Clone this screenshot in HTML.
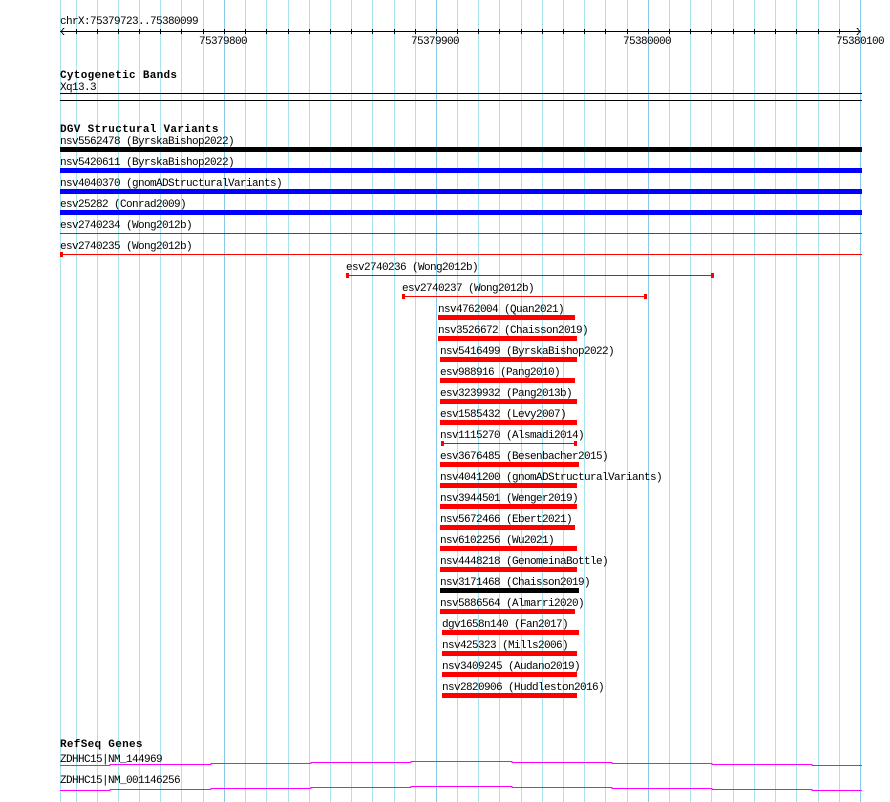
<!DOCTYPE html>
<html><head><meta charset="utf-8"><style>
html,body{margin:0;padding:0;background:#fff;}
svg{display:block;}
text{font-family:"Liberation Mono",monospace;font-size:11px;letter-spacing:-0.6px;fill:#000;}
.b{font-weight:bold;font-size:11px;letter-spacing:0.3px;}
</style></head><body>
<svg width="890" height="802" viewBox="0 0 890 802" xmlns="http://www.w3.org/2000/svg" shape-rendering="crispEdges">
<line x1="60.5" y1="0" x2="60.5" y2="802" stroke="#a8e4ee"/>
<g stroke="#a8e4ee">
<line x1="76.5" y1="0" x2="76.5" y2="802"/><line x1="97.5" y1="0" x2="97.5" y2="802"/><line x1="118.5" y1="0" x2="118.5" y2="802"/><line x1="139.5" y1="0" x2="139.5" y2="802"/><line x1="160.5" y1="0" x2="160.5" y2="802"/><line x1="181.5" y1="0" x2="181.5" y2="802"/><line x1="203.5" y1="0" x2="203.5" y2="802"/>
<line x1="245.5" y1="0" x2="245.5" y2="802"/><line x1="266.5" y1="0" x2="266.5" y2="802"/><line x1="288.5" y1="0" x2="288.5" y2="802"/><line x1="309.5" y1="0" x2="309.5" y2="802"/><line x1="330.5" y1="0" x2="330.5" y2="802"/><line x1="351.5" y1="0" x2="351.5" y2="802"/><line x1="372.5" y1="0" x2="372.5" y2="802"/><line x1="394.5" y1="0" x2="394.5" y2="802"/><line x1="415.5" y1="0" x2="415.5" y2="802"/>
<line x1="457.5" y1="0" x2="457.5" y2="802"/><line x1="478.5" y1="0" x2="478.5" y2="802"/><line x1="499.5" y1="0" x2="499.5" y2="802"/><line x1="521.5" y1="0" x2="521.5" y2="802"/><line x1="542.5" y1="0" x2="542.5" y2="802"/><line x1="563.5" y1="0" x2="563.5" y2="802"/><line x1="584.5" y1="0" x2="584.5" y2="802"/><line x1="605.5" y1="0" x2="605.5" y2="802"/><line x1="627.5" y1="0" x2="627.5" y2="802"/>
<line x1="669.5" y1="0" x2="669.5" y2="802"/><line x1="690.5" y1="0" x2="690.5" y2="802"/><line x1="711.5" y1="0" x2="711.5" y2="802"/><line x1="733.5" y1="0" x2="733.5" y2="802"/><line x1="754.5" y1="0" x2="754.5" y2="802"/><line x1="775.5" y1="0" x2="775.5" y2="802"/><line x1="796.5" y1="0" x2="796.5" y2="802"/><line x1="818.5" y1="0" x2="818.5" y2="802"/><line x1="839.5" y1="0" x2="839.5" y2="802"/>
</g>
<g stroke="#88c8e8">
<line x1="224.5" y1="0" x2="224.5" y2="802"/><line x1="436.5" y1="0" x2="436.5" y2="802"/><line x1="648.5" y1="0" x2="648.5" y2="802"/><line x1="860.5" y1="0" x2="860.5" y2="802"/>
</g>
<text x="60" y="24">chrX:75379723..75380099</text>
<line x1="60" y1="31.5" x2="861" y2="31.5" stroke="#000"/>
<polyline points="64,28 61,31.5 64,35" fill="none" stroke="#000"/>
<polyline points="857,28 860,31.5 857,35" fill="none" stroke="#000"/>
<g stroke="#000">
<line x1="76.5" y1="29" x2="76.5" y2="34"/><line x1="97.5" y1="29" x2="97.5" y2="34"/><line x1="118.5" y1="29" x2="118.5" y2="34"/><line x1="139.5" y1="29" x2="139.5" y2="34"/><line x1="160.5" y1="29" x2="160.5" y2="34"/><line x1="181.5" y1="29" x2="181.5" y2="34"/><line x1="203.5" y1="29" x2="203.5" y2="34"/><line x1="224.5" y1="29" x2="224.5" y2="34"/><line x1="245.5" y1="29" x2="245.5" y2="34"/><line x1="266.5" y1="29" x2="266.5" y2="34"/><line x1="288.5" y1="29" x2="288.5" y2="34"/><line x1="309.5" y1="29" x2="309.5" y2="34"/><line x1="330.5" y1="29" x2="330.5" y2="34"/><line x1="351.5" y1="29" x2="351.5" y2="34"/><line x1="372.5" y1="29" x2="372.5" y2="34"/><line x1="394.5" y1="29" x2="394.5" y2="34"/><line x1="415.5" y1="29" x2="415.5" y2="34"/><line x1="436.5" y1="29" x2="436.5" y2="34"/><line x1="457.5" y1="29" x2="457.5" y2="34"/><line x1="478.5" y1="29" x2="478.5" y2="34"/><line x1="499.5" y1="29" x2="499.5" y2="34"/><line x1="521.5" y1="29" x2="521.5" y2="34"/><line x1="542.5" y1="29" x2="542.5" y2="34"/><line x1="563.5" y1="29" x2="563.5" y2="34"/><line x1="584.5" y1="29" x2="584.5" y2="34"/><line x1="605.5" y1="29" x2="605.5" y2="34"/><line x1="627.5" y1="29" x2="627.5" y2="34"/><line x1="648.5" y1="29" x2="648.5" y2="34"/><line x1="669.5" y1="29" x2="669.5" y2="34"/><line x1="690.5" y1="29" x2="690.5" y2="34"/><line x1="711.5" y1="29" x2="711.5" y2="34"/><line x1="733.5" y1="29" x2="733.5" y2="34"/><line x1="754.5" y1="29" x2="754.5" y2="34"/><line x1="775.5" y1="29" x2="775.5" y2="34"/><line x1="796.5" y1="29" x2="796.5" y2="34"/><line x1="818.5" y1="29" x2="818.5" y2="34"/><line x1="839.5" y1="29" x2="839.5" y2="34"/>
</g>
<text x="199" y="44">75379800</text>
<text x="411" y="44">75379900</text>
<text x="623" y="44">75380000</text>
<text x="836" y="44">75380100</text>
<text class="b" x="60" y="78">Cytogenetic Bands</text>
<text x="60" y="90">Xq13.3</text>
<rect x="60" y="93" width="802" height="1" fill="#000"/>
<rect x="60" y="100" width="802" height="1" fill="#000"/>
<text class="b" x="60" y="132">DGV Structural Variants</text>
<text x="60" y="144">nsv5562478 (ByrskaBishop2022)</text>
<rect x="60" y="147" width="802" height="5" fill="#000"/>
<text x="60" y="165">nsv5420611 (ByrskaBishop2022)</text>
<rect x="60" y="168" width="802" height="5" fill="#0000ff"/>
<text x="60" y="186">nsv4040370 (gnomADStructuralVariants)</text>
<rect x="60" y="189" width="802" height="5" fill="#0000ff"/>
<text x="60" y="207">esv25282 (Conrad2009)</text>
<rect x="60" y="210" width="802" height="5" fill="#0000ff"/>
<text x="60" y="228">esv2740234 (Wong2012b)</text>
<rect x="60" y="233" width="802" height="1" fill="#f00"/>
<text x="60" y="249">esv2740235 (Wong2012b)</text>
<rect x="60" y="254" width="802" height="1" fill="#f00"/>
<rect x="60" y="252" width="3" height="5" fill="#f00"/>
<text x="346" y="270">esv2740236 (Wong2012b)</text>
<rect x="346" y="275" width="368" height="1" fill="#f00"/>
<rect x="346" y="273" width="3" height="5" fill="#f00"/><rect x="711" y="273" width="3" height="5" fill="#f00"/>
<text x="402" y="291">esv2740237 (Wong2012b)</text>
<rect x="402" y="296" width="245" height="1" fill="#f00"/>
<rect x="402" y="294" width="3" height="5" fill="#f00"/><rect x="644" y="294" width="3" height="5" fill="#f00"/>

<text x="438" y="312">nsv4762004 (Quan2021)</text><rect x="438" y="315" width="137" height="5" fill="#f00"/>
<text x="438" y="333">nsv3526672 (Chaisson2019)</text><rect x="438" y="336" width="139" height="5" fill="#f00"/>
<text x="440" y="354">nsv5416499 (ByrskaBishop2022)</text><rect x="440" y="357" width="137" height="5" fill="#f00"/>
<text x="440" y="375">esv988916 (Pang2010)</text><rect x="440" y="378" width="135" height="5" fill="#f00"/>
<text x="440" y="396">esv3239932 (Pang2013b)</text><rect x="440" y="399" width="137" height="5" fill="#f00"/>
<text x="440" y="417">esv1585432 (Levy2007)</text><rect x="440" y="420" width="137" height="5" fill="#f00"/>
<text x="440" y="438">nsv1115270 (Alsmadi2014)</text><rect x="441" y="443" width="135" height="1" fill="#f00"/><rect x="441" y="441" width="3" height="5" fill="#f00"/><rect x="574" y="441" width="3" height="5" fill="#f00"/>
<text x="440" y="459">esv3676485 (Besenbacher2015)</text><rect x="440" y="462" width="139" height="5" fill="#f00"/>
<text x="440" y="480">nsv4041200 (gnomADStructuralVariants)</text><rect x="440" y="483" width="137" height="5" fill="#f00"/>
<text x="440" y="501">nsv3944501 (Wenger2019)</text><rect x="440" y="504" width="137" height="5" fill="#f00"/>
<text x="440" y="522">nsv5672466 (Ebert2021)</text><rect x="440" y="525" width="135" height="5" fill="#f00"/>
<text x="440" y="543">nsv6102256 (Wu2021)</text><rect x="440" y="546" width="137" height="5" fill="#f00"/>
<text x="440" y="564">nsv4448218 (GenomeinaBottle)</text><rect x="440" y="567" width="137" height="5" fill="#f00"/>
<text x="440" y="585">nsv3171468 (Chaisson2019)</text><rect x="440" y="588" width="139" height="5" fill="#000"/>
<text x="440" y="606">nsv5886564 (Almarri2020)</text><rect x="440" y="609" width="135" height="5" fill="#f00"/>
<text x="442" y="627">dgv1658n140 (Fan2017)</text><rect x="442" y="630" width="137" height="5" fill="#f00"/>
<text x="442" y="648">nsv425323 (Mills2006)</text><rect x="442" y="651" width="135" height="5" fill="#f00"/>
<text x="442" y="669">nsv3409245 (Audano2019)</text><rect x="442" y="672" width="135" height="5" fill="#f00"/>
<text x="442" y="690">nsv2820906 (Huddleston2016)</text><rect x="442" y="693" width="135" height="5" fill="#f00"/>

<text class="b" x="60" y="747">RefSeq Genes</text>
<text x="60" y="762">ZDHHC15|NM_144969</text>
<polyline fill="none" stroke="#ff00ff" points="60,765.5 110,765.5 110,764.5 211,764.5 211,763.5 311,763.5 311,762.5 411,762.5 411,761.5 512,761.5 512,762.5 612,762.5 612,763.5 712,763.5 712,764.5 812,764.5 812,765.5 862,765.5"/>
<text x="60" y="783">ZDHHC15|NM_001146256</text>
<polyline fill="none" stroke="#ff00ff" points="60,790.5 110,790.5 110,789.5 211,789.5 211,788.5 311,788.5 311,787.5 411,787.5 411,786.5 512,786.5 512,787.5 612,787.5 612,788.5 712,788.5 712,789.5 812,789.5 812,790.5 862,790.5"/>
</svg>
</body></html>
